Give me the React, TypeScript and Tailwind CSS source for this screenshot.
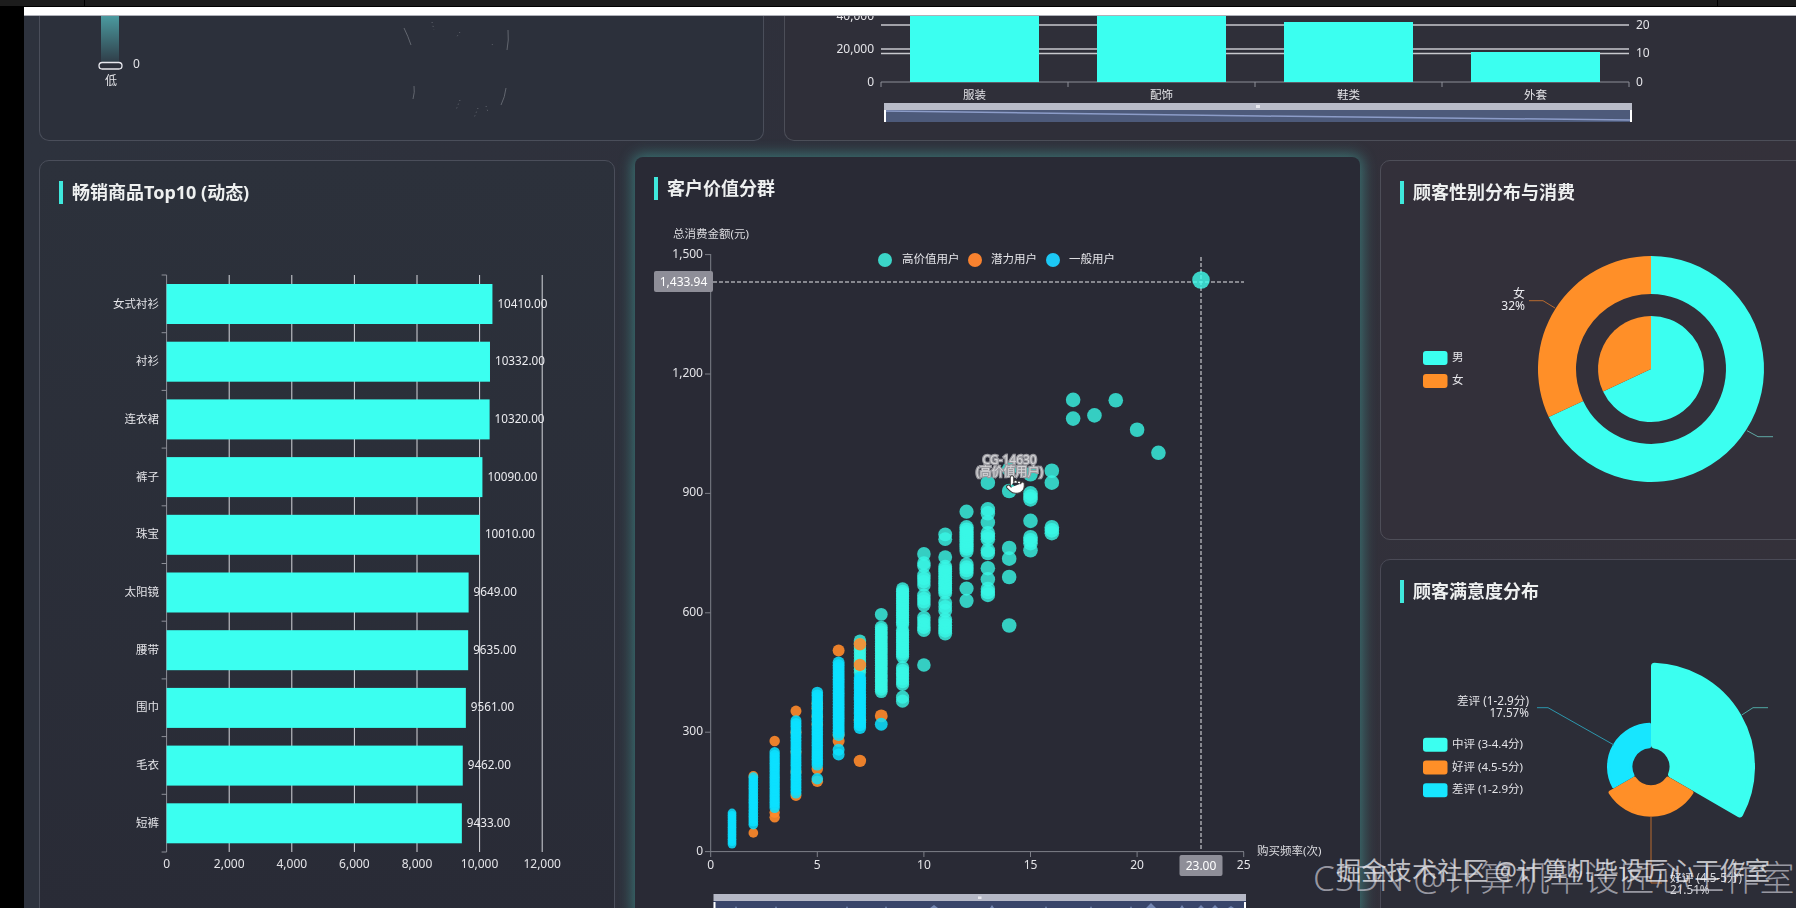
import { Pointer } from 'lucide-react';

const CYAN = '#3bfff0';
const ORANGE = '#ff8f28';
const SKY = '#17e6ff';

function span(from: number, to: number, step: number) {
  const out: number[] = [];
  for (let v = from; v <= to; v += step) out.push(v);
  return out;
}

const topProducts = [
  ['女式衬衫', 10410],
  ['衬衫', 10332],
  ['连衣裙', 10320],
  ['裤子', 10090],
  ['珠宝', 10010],
  ['太阳镜', 9649],
  ['腰带', 9635],
  ['围巾', 9561],
  ['毛衣', 9462],
  ['短裤', 9433],
] as const;

const teal: Record<number, number[]> = {
  7: span(450, 535, 8),
  8: [596, ...span(402, 566, 6)],
  9: [378, 388, ...span(420, 463, 7), ...span(490, 560, 6), ...span(570, 663, 6)],
  10: [469, ...span(556, 590, 8), ...span(620, 650, 8), ...span(670, 700, 8), 718, 725, 748],
  11: [...span(548, 585, 7), 605, 615, 625, ...span(650, 720, 6), 740, 785, 797],
  12: [630, 661, ...span(700, 725, 7), ...span(755, 820, 6), 854],
  13: [645, 652, 660, 684, 712, 750, 757, 785, 792, 800, 827, 850, 860, 927],
  14: [568, 690, 736, 763, 906, 960],
  15: [757, 775, 782, 790, 831, 885, 892, 900, 948],
  16: [800, 807, 815, 927, 957],
  17: [1088, 1135],
  18: [1096],
  19: [1134],
  20: [1060],
  21: [1002],
};

const orange: Record<number, number[]> = {
  2: [47, 190],
  3: [86, 98, 278],
  4: [141, 200, 250, 300, 353],
  5: [177, 208, 320, 340, 360, 372],
  6: [278, 293, 505],
  7: [228, 330, 469, 521],
  8: [341],
};

const blue: Record<number, number[]> = {
  1: span(19, 98, 6),
  2: span(68, 190, 7),
  3: span(110, 256, 7),
  4: span(147, 329, 7),
  5: [183, ...span(218, 402, 7)],
  6: [244, 256, ...span(293, 481, 7)],
  7: span(311, 438, 7),
  8: [320],
};

const xOf = (f: number) => 710.7 + f * 21.32;
const yOf = (v: number) => 851.6 - v * 0.398;
const rOf = (f: number) => Math.min(7.3, 3.3 + 1.1 * Math.sqrt(f));

function pt(cx: number, cy: number, r: number, deg: number) {
  const a = (deg * Math.PI) / 180;
  return [cx + r * Math.sin(a), cy - r * Math.cos(a)];
}

// sector measured clockwise from 12 o'clock
function sector(cx: number, cy: number, ro: number, ri: number, a0: number, a1: number) {
  const large = a1 - a0 > 180 ? 1 : 0;
  const [x0, y0] = pt(cx, cy, ro, a0);
  const [x1, y1] = pt(cx, cy, ro, a1);
  if (ri === 0) return `M${cx} ${cy}L${x0} ${y0}A${ro} ${ro} 0 ${large} 1 ${x1} ${y1}Z`;
  const [x2, y2] = pt(cx, cy, ri, a1);
  const [x3, y3] = pt(cx, cy, ri, a0);
  return `M${x0} ${y0}A${ro} ${ro} 0 ${large} 1 ${x1} ${y1}L${x2} ${y2}A${ri} ${ri} 0 ${large} 0 ${x3} ${y3}Z`;
}

// same sector, pulled in by c so a round stroke of 2c gives soft corners
function softSector(cx: number, cy: number, ro: number, ri: number, a0: number, a1: number, c: number) {
  const o = ro - c;
  const i = ri + c;
  const dO = ((c / o) * 180) / Math.PI;
  const dI = ((c / i) * 180) / Math.PI;
  const [x0, y0] = pt(cx, cy, o, a0 + dO);
  const [x1, y1] = pt(cx, cy, o, a1 - dO);
  const [x2, y2] = pt(cx, cy, i, a1 - dI);
  const [x3, y3] = pt(cx, cy, i, a0 + dI);
  return `M${x0} ${y0}A${o} ${o} 0 0 1 ${x1} ${y1}L${x2} ${y2}A${i} ${i} 0 0 0 ${x3} ${y3}Z`;
}

function Title({ text }: { text: string }) {
  return (
    <div className="flex h-[23px] items-center gap-[9px] pl-[19px]">
      <span className="h-[23px] w-[4px] bg-[#3fe8dc]" />
      <h2 className="pb-[2px] text-[18px] font-bold leading-none text-[#eef0f0]">{text}</h2>
    </div>
  );
}

function Legend({ items, y, step }: { items: [string, string][]; y: number; step: number }) {
  return (
    <>
      {items.map(([name, color], i) => (
        <g key={name}>
          <rect x={1423} y={y + i * step} width={24.5} height={14} rx={3} fill={color} />
          <text x={1452} y={y + i * step + 10} className="fill-[#e4e4e8] text-[11.5px]">
            {name}
          </text>
        </g>
      ))}
    </>
  );
}

function TopBars() {
  const x0 = 166.6;
  const unit = 0.0313;
  return (
    <svg width={574} height={680} viewBox="40 204 574 680" className="block">
      {[2000, 4000, 6000, 8000, 10000, 12000].map((v) => (
        <line key={v} x1={x0 + v * unit} x2={x0 + v * unit} y1={275} y2={852} stroke="#d6d7dc" />
      ))}
      <line x1={x0} x2={x0} y1={275} y2={852} stroke="#8d8f98" />
      {span(0, 10, 1).map((i) => (
        <line key={i} x1={x0 - 5} x2={x0} y1={275 + i * 57.7} y2={275 + i * 57.7} stroke="#8d8f98" />
      ))}
      {topProducts.map(([name, value], i) => {
        const top = 284 + i * 57.7;
        const w = value * unit;
        return (
          <g key={name}>
            <rect x={x0} y={top} width={w} height={40} fill={CYAN} />
            <text x={159} y={top + 23.5} textAnchor="end" className="fill-[#e4e4e8] text-[11.5px]">
              {name}
            </text>
            <text x={x0 + w + 5} y={top + 23.5} className="fill-[#ececf0] text-[11.7px]">
              {value.toFixed(2)}
            </text>
          </g>
        );
      })}
      {[0, 2000, 4000, 6000, 8000, 10000, 12000].map((v) => (
        <text key={v} x={x0 + v * unit} y={868} textAnchor="middle" className="fill-[#e4e4e8] text-[12px]">
          {v.toLocaleString('en-US')}
        </text>
      ))}
    </svg>
  );
}

function Scatter() {
  const layer = (data: Record<number, number[]>, fill: string, opacity: number) =>
    Object.entries(data).flatMap(([f, values]) =>
      values.map((v) => (
        <circle key={`${fill}-${f}-${v}`} cx={xOf(+f)} cy={yOf(v)} r={rOf(+f)} fill={fill} opacity={opacity} />
      )),
    );
  return (
    <svg width={725} height={708} viewBox="635 200 725 708" className="block">
      <text x={673} y={238} className="fill-[#dcdce0] text-[11.5px]">总消费金额(元)</text>
      <text x={1257} y={855} className="fill-[#dcdce0] text-[11.5px]">购买频率(次)</text>

      <line x1={xOf(0)} x2={xOf(0)} y1={254} y2={852} stroke="#7d7f88" />
      <line x1={xOf(0)} x2={1244} y1={851.6} y2={851.6} stroke="#7d7f88" />
      {[0, 300, 600, 900, 1200, 1500].map((v) => (
        <g key={v}>
          <line x1={705} x2={xOf(0)} y1={yOf(v)} y2={yOf(v)} stroke="#7d7f88" />
          <text x={703} y={yOf(v) + 3} textAnchor="end" className="fill-[#e4e4e8] text-[12px]">
            {v.toLocaleString('en-US')}
          </text>
        </g>
      ))}
      {[0, 5, 10, 15, 20, 25].map((f) => (
        <g key={f}>
          <line x1={xOf(f)} x2={xOf(f)} y1={852} y2={857} stroke="#7d7f88" />
          <text x={xOf(f)} y={869} textAnchor="middle" className="fill-[#e4e4e8] text-[12px]">
            {f}
          </text>
        </g>
      ))}

      {layer(teal, '#38f8e6', 0.8)}
      {layer(orange, '#ff8a2a', 0.9)}
      {layer(blue, '#0ce0ff', 0.85)}

      <line x1={713} x2={1244} y1={282} y2={282} stroke="#e6e6ea" strokeDasharray="4 2" />
      <line x1={1201} x2={1201} y1={257} y2={851} stroke="#e6e6ea" strokeDasharray="4 2" />
      <circle cx={1201} cy={280} r={8.8} fill="#40ffed" opacity={0.8} />

      <rect x={654} y={271} width={59} height={21} rx={2} fill="#8e8e98" />
      <text x={683.5} y={285.5} textAnchor="middle" className="fill-white text-[12px]">1,433.94</text>
      <rect x={1179.5} y={855} width={43} height={21} rx={2} fill="#8e8e98" />
      <text x={1201} y={869.5} textAnchor="middle" className="fill-white text-[12px]">23.00</text>

      <text x={1009.6} y={464} textAnchor="middle" stroke="#9a9aa0" strokeWidth={2.5} paintOrder="stroke" className="fill-[#d4d4d6] text-[12px]">
        CG-14630
      </text>
      <text x={1009.6} y={476} textAnchor="middle" stroke="#9a9aa0" strokeWidth={2.5} paintOrder="stroke" className="fill-[#d4d4d6] text-[12px]">
        (高价值用户)
      </text>
      <Pointer x={1005} y={474} width={21} height={21} fill="#ffffff" stroke="#3a3a3a" strokeWidth={1.2} />

      <circle cx={885} cy={260} r={7} fill="#3bd5c8" />
      <text x={902} y={263} className="fill-[#e4e4e8] text-[11.5px]">高价值用户</text>
      <circle cx={975} cy={260} r={7} fill="#f8822f" />
      <text x={991} y={263} className="fill-[#e4e4e8] text-[11.5px]">潜力用户</text>
      <circle cx={1053} cy={260} r={7} fill="#1cc8f5" />
      <text x={1069} y={263} className="fill-[#e4e4e8] text-[11.5px]">一般用户</text>

      <rect x={713.5} y={894} width={532.5} height={7} fill="#b5b8c6" />
      <rect x={713.5} y={901} width={532.5} height={7} fill="#39456a" />
      <path d="M735 908l1-2 1 2M775 908l1-2 1 2M846 908l1-2 1 2M885 908l1-2 1 2M930 908l4-3 4 3M990 908l2-3 2 3M1045 908l1-2 1 2M1090 908l1-2 1 2M1130 908l1-2 1 2M1146 908l5-5 5 5M1180 908l2-3 2 3M1198 908l3-3 3 3M1212 908l3-3 3 3M1228 908l3-2 3 2" fill="#7486b2" />
      <rect x={713.5} y={902} width={2} height={6} fill="#ffffff" />
      <rect x={1244} y={902} width={2} height={6} fill="#ffffff" />
      <rect x={978} y={896.5} width={3.5} height={2.5} fill="#e8e8ee" />
    </svg>
  );
}

function SalesBars() {
  const bars: [string, number, number][] = [
    ['服装', 910, 0],
    ['配饰', 1097, 0],
    ['鞋类', 1284, 22],
    ['外套', 1471, 52],
  ];
  return (
    <svg width={1011} height={125} viewBox="785 16 1011 125" className="block">
      {[25, 49, 53.5].map((y) => (
        <line key={y} x1={881} x2={1629} y1={y} y2={y} stroke="#c8c9ce" strokeWidth={1.4} />
      ))}
      <line x1={881} x2={1629} y1={82} y2={82} stroke="#8d8f98" />
      {[881, 1068, 1255, 1442, 1629].map((x) => (
        <line key={x} x1={x} x2={x} y1={82} y2={87} stroke="#8d8f98" />
      ))}
      {bars.map(([name, x, top]) => (
        <g key={name}>
          <rect x={x} y={top} width={129} height={82 - top} fill={CYAN} />
          <text x={x + 64.5} y={99} textAnchor="middle" className="fill-[#e4e4e8] text-[11.5px]">
            {name}
          </text>
        </g>
      ))}
      <text x={874} y={20} textAnchor="end" className="fill-[#e4e4e8] text-[12px]">40,000</text>
      <text x={874} y={53} textAnchor="end" className="fill-[#e4e4e8] text-[12px]">20,000</text>
      <text x={874} y={86} textAnchor="end" className="fill-[#e4e4e8] text-[12px]">0</text>
      <text x={1636} y={29} className="fill-[#e4e4e8] text-[12px]">20</text>
      <text x={1636} y={57} className="fill-[#e4e4e8] text-[12px]">10</text>
      <text x={1636} y={86} className="fill-[#e4e4e8] text-[12px]">0</text>

      <rect x={884} y={103} width={748} height={7} fill="#b9bcc9" />
      <rect x={884} y={110} width={748} height={12} fill="#4d5a7a" />
      <path d="M884 111L1260 116L1632 120" fill="none" stroke="#8c9cc8" strokeWidth={1.5} />
      <rect x={884} y={110} width={2} height={12} fill="#ffffff" />
      <rect x={1630} y={110} width={2} height={12} fill="#ffffff" />
      <rect x={1256} y={105} width={4} height={3} fill="#e8e8ee" />
    </svg>
  );
}

function GenderDonut() {
  const cx = 1651;
  const cy = 369;
  return (
    <svg width={448} height={330} viewBox="1381 204 448 330" className="block">
      <Legend items={[['男', CYAN], ['女', ORANGE]]} y={351} step={23} />
      <path d={sector(cx, cy, 113, 75, 0, 244.8)} fill={CYAN} />
      <path d={sector(cx, cy, 113, 75, 244.8, 360)} fill={ORANGE} />
      <path d={sector(cx, cy, 53, 0, 0, 244.8)} fill={CYAN} />
      <path d={sector(cx, cy, 53, 0, 244.8, 360)} fill={ORANGE} />
      <path d="M1555 308L1543 300.7H1529" fill="none" stroke="#b86a2f" />
      <path d="M1747 430.7L1758 436.7H1773" fill="none" stroke="#5fa8a4" />
      <text x={1525} y={298} textAnchor="end" className="fill-[#ececf0] text-[12px]">女</text>
      <text x={1525} y={309.5} textAnchor="end" className="fill-[#ececf0] text-[12px]">32%</text>
    </svg>
  );
}

function SatisfactionRose() {
  const cx = 1651;
  const cy = 766.7;
  return (
    <svg width={448} height={320} viewBox="1381 603 448 320" className="block">
      <Legend
        items={[['中评 (3-4.4分)', CYAN], ['好评 (4.5-5分)', ORANGE], ['差评 (1-2.9分)', SKY]]}
        y={737.7}
        step={22.8}
      />
      <path d={softSector(cx, cy, 104, 18.5, 0, 120, 3.5)} fill={CYAN} stroke={CYAN} strokeWidth={7} strokeLinejoin="round" />
      <path d={softSector(cx, cy, 50, 18.5, 120, 240, 2)} fill={ORANGE} stroke={ORANGE} strokeWidth={4} strokeLinejoin="round" />
      <path d={softSector(cx, cy, 44, 18.5, 240, 360, 1.5)} fill={SKY} stroke={SKY} strokeWidth={3} strokeLinejoin="round" />
      <path d="M1614 745L1548 707.7H1537" fill="none" stroke="#2c97ad" />
      <path d="M1741.7 715L1753 707.7H1768" fill="none" stroke="#4fa8a4" />
      <path d="M1651 816V883H1662" fill="none" stroke="#b86a2f" />
      <text x={1529} y={705} textAnchor="end" className="fill-[#e4e4e8] text-[11.7px]">差评 (1-2.9分)</text>
      <text x={1529} y={716.5} textAnchor="end" className="fill-[#e4e4e8] text-[11.7px]">17.57%</text>
      <text x={1670} y={882} className="fill-[#d8d8dc] text-[11.7px]">好评 (4.5-5分)</text>
      <text x={1670} y={894} className="fill-[#d8d8dc] text-[11.7px]">21.51%</text>
    </svg>
  );
}

function MapRemnant() {
  return (
    <svg width={723} height={125} viewBox="40 16 723 125" className="block">
      <defs>
        <linearGradient id="scale" x1="0" y1="0" x2="0" y2="1">
          <stop offset="0" stopColor="#4b9a9f" />
          <stop offset="1" stopColor="#2f3c47" />
        </linearGradient>
      </defs>
      <rect x={101} y={16} width={18} height={47} fill="url(#scale)" />
      <rect x={99} y={62.5} width={23} height={6.5} rx={3.2} fill="none" stroke="#e8e8ee" strokeWidth={1.3} />
      <text x={133} y={68} className="fill-[#e4e4e8] text-[12px]">0</text>
      <text x={111} y={85} textAnchor="middle" className="fill-[#e4e4e8] text-[12px]">低</text>
      <g fill="none" stroke="#62666f">
        <path d="M404 28Q408 36 411 45" />
        <path d="M508 30Q509 40 507 50" />
        <path d="M414 86Q415 92 413 99" />
        <path d="M506 88Q505 97 501 105" />
        <path d="M432 22L434 30M460 32L456 38M492 44L494 47M460 100L456 110M478 108L474 118M486 106L488 112" strokeDasharray="1 3" />
      </g>
    </svg>
  );
}

export default function App() {
  return (
    <div className="relative h-[908px] w-[1796px] overflow-hidden bg-black font-['Noto_Sans','Noto_Sans_CJK_SC',sans-serif]">
      <div className="flex h-[7px] border-b border-black bg-[#1c1c1c]">
        <div className="w-[85px] border-r border-black" />
        <div className="w-[1633px] border-r border-black" />
      </div>

      <div className="ml-[24px] h-[901px] w-[1772px] bg-gradient-to-r from-[#2d323d] via-[#2f303b] to-[#34313a] blur-[0.4px]">
        <div className="relative z-10 h-[9px] border-b border-[#aeb0b8] bg-white" />

        <div className="flex gap-[20px] pl-[15px]">
          <div className="h-[125px] w-[725px] shrink-0 rounded-b-[10px] border-x border-b border-[#4a4e5a] bg-[#2c303b]">
            <MapRemnant />
          </div>
          <div className="h-[125px] w-[1040px] shrink-0 rounded-b-[10px] border-x border-b border-[#4c4e58] bg-[#2f2f39]">
            <SalesBars />
          </div>
        </div>

        <div className="mt-[16px] flex items-start gap-[20px] pl-[15px]">
          <div className="mt-[3px] h-[760px] w-[576px] shrink-0 rounded-[10px] border border-[#4a4e5a] bg-gradient-to-b from-[#2c313b] to-[#292b36] pt-[20px]">
            <Title text="畅销商品Top10 (动态)" />
            <TopBars />
          </div>

          <div className="h-[760px] w-[725px] shrink-0 rounded-[8px] bg-[#292a35] pt-[20px] shadow-[0_0_14px_3px_rgba(70,190,180,0.45)]">
            <Title text="客户价值分群" />
            <Scatter />
          </div>

          <div className="mt-[3px] flex w-[450px] shrink-0 flex-col gap-[19px]">
            <div className="h-[380px] rounded-[10px] border border-[#4e4e58] bg-[#33303a] pt-[20px]">
              <Title text="顾客性别分布与消费" />
              <GenderDonut />
            </div>
            <div className="h-[380px] rounded-[10px] border border-[#4a4a56] bg-[#2c2d37] pt-[20px]">
              <Title text="顾客满意度分布" />
              <SatisfactionRose />
            </div>
          </div>
        </div>
      </div>

      <div className="absolute left-[1313px] top-[856px] whitespace-nowrap text-[35px] font-light leading-[44px] text-[#c8c8d2]/70">
        CSDN @计算机毕设匠心工作室
      </div>
      <div className="absolute left-[1336px] top-[852px] whitespace-nowrap text-[25.3px] leading-[36px] text-[#f0f0f4]/75">
        掘金技术社区 @计算机毕设匠心工作室
      </div>
    </div>
  );
}
